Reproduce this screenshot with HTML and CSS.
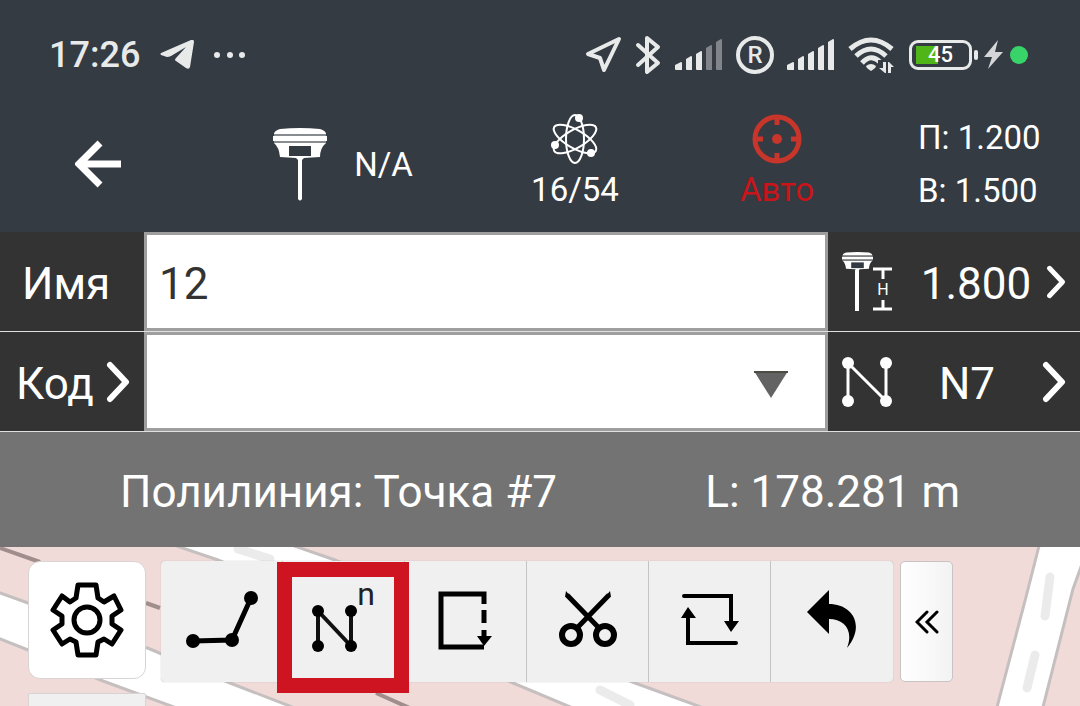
FILE: index.html
```html
<!doctype html>
<html lang="ru">
  <head>
    <meta charset="utf-8">
    <meta name="viewport" content="width=device-width">
    <title>Съёмка</title>
    <link rel="stylesheet" href="styles.css">
  </head>
  <body>
    <svg class="defs" aria-hidden="true">
      <symbol id="receiver" viewBox="0 0 54 73">
        <path fill="#fff" d="M7 1Q27-1 47 1Q53 3 53 6H1Q1 3 7 1ZM0 8H54V13H0ZM1 15H53Q47 20 47 29L31 30L29 32V71Q27 74 25 71V32L23 30L7 29Q6 19 1 15Z"/>
        <path fill="#888c90" d="M1 6H53V8H1ZM1 13H53V15H1Z"/>
        <path fill="#343a42" d="M16 18H38V28H16Z"/>
      </symbol>
      <symbol id="chevron" viewBox="0 0 24 42">
        <path d="M4 4L20 21L4 38" fill="none" stroke="#fff" stroke-width="6" stroke-linecap="round" stroke-linejoin="round"/>
      </symbol>
      <symbol id="bars" viewBox="0 0 48 31">
        <path d="M0 26L6 23Q7 23 7 24V31H1Q0 31 0 30ZM11 20L16 17Q17 17 17 18V31H12Q11 31 11 30ZM21 15L26 12Q27 12 27 13V31H22Q21 31 21 30Z"/>
      </symbol>
      <symbol id="bars-top" viewBox="0 0 48 31">
        <path d="M31 9L36 6Q37 6 37 7V31H32Q31 31 31 30ZM41 3L46 0Q47 0 47 1V31H42Q41 31 41 30Z"/>
      </symbol>
    </svg>

    <div class="status">
      <span class="time">17:26</span>
      <svg class="telegram" width="34" height="30" viewBox="0 0 34 30"><path d="M1 13L31 0Q34-1 34 2L30 27Q29 30 26 28L16 21Q14 20 16 18L26 7L11 16Q9 17 7 17L1 15Q0 14 1 13Z"/></svg>
      <svg width="32" height="8" viewBox="0 0 32 8"><circle cx="3" cy="4" r="3"/><circle cx="16" cy="4" r="3"/><circle cx="28" cy="4" r="3"/></svg>
      <div class="status-icons">
        <svg width="37" height="37" viewBox="0 0 37 37"><path d="M34 3L3 18L15 22L19 34Z" fill="none" stroke="#e8eaea" stroke-width="4" stroke-linejoin="round"/></svg>
        <svg width="27" height="40" viewBox="0 0 27 40"><path d="M3 10L23 28L12 37V3L23 12L3 30" fill="none" stroke="#e8eaea" stroke-width="4" stroke-linecap="round" stroke-linejoin="round"/></svg>
        <svg width="48" height="31"><use href="#bars"/><use class="dim" href="#bars-top"/></svg>
        <svg width="38" height="38" viewBox="0 0 38 38"><circle cx="19" cy="19" r="17" fill="none" stroke="#e8eaea" stroke-width="4"/><text class="roaming" x="19" y="27">R</text></svg>
        <svg width="48" height="31"><use href="#bars"/><use href="#bars-top"/></svg>
        <svg width="48" height="36" viewBox="0 0 48 36">
          <g fill="none" stroke="#e8eaea" stroke-width="5"><path d="M2 12Q23-6 44 12"/><path d="M8 19Q23 5 38 19"/><path d="M14 26Q23 16 32 25"/></g>
          <path d="M18 29Q23 25 28 29Q28 31 23 34Q18 31 18 29Z"/>
          <path d="M30 23H48V36H30Z" fill="#343b43"/>
          <path d="M35 25H38V36H37L31 31H35ZM40 36V25H41L46 30H43V36Z"/>
        </svg>
        <div class="power">
          <div class="battery"><span>45</span></div>
          <svg width="22" height="30" viewBox="0 0 22 30"><path d="M15 0L1 17H9L5 29L20 12H12Z" fill="#d5d6d7"/></svg>
          <span class="privacy"></span>
        </div>
      </div>
    </div>

    <div class="toolbar">
      <button class="back" aria-label="Назад">
        <svg width="46" height="48" viewBox="0 0 46 48"><path d="M25 3L4 24L25 45M4 24H46" fill="none" stroke="#fff" stroke-width="7"/></svg>
      </button>
      <button class="device"><svg width="54" height="73"><use href="#receiver"/></svg>N/A</button>
      <button class="stack">
        <svg width="50" height="52" viewBox="0 0 50 52">
          <g fill="none" stroke="#fff" stroke-width="2"><ellipse cx="25" cy="26" rx="9" ry="24"/><ellipse cx="25" cy="26" rx="9" ry="24" transform="rotate(60 25 26)"/><ellipse cx="25" cy="26" rx="9" ry="24" transform="rotate(120 25 26)"/></g>
          <g fill="#fff"><circle cx="29" cy="5" r="4"/><circle cx="5" cy="32" r="4"/><circle cx="41" cy="40" r="4"/></g>
        </svg>
        16/54
      </button>
      <button class="stack auto">
        <svg width="50" height="52" viewBox="0 0 50 52"><circle cx="25" cy="26" r="22" fill="none" stroke="#c8352b" stroke-width="5"/><circle cx="25" cy="26" r="5" fill="#c8352b"/><path d="M25 5V12M25 40V47M4 26H11M39 26H46" stroke="#c8352b" stroke-width="5"/></svg>
        Авто
      </button>
      <div class="accuracy"><span>П: 1.200</span><span>В: 1.500</span></div>
    </div>

    <div class="row">
      <label class="name" for="name">Имя</label>
      <input class="field" id="name" type="text" value="12">
      <button class="option antenna">
        <svg width="50" height="60" viewBox="0 0 50 60">
          <use href="#receiver" width="31" height="42"/>
          <path d="M15 18V59" stroke="#fff" stroke-width="4"/>
          <path d="M31 17H50M41 17V27M31 57H50M41 57V48" stroke="#fff" stroke-width="3"/>
          <text class="height-mark" x="41" y="43">H</text>
        </svg>
        <span>1.800</span>
        <svg width="20" height="34"><use href="#chevron"/></svg>
      </button>
    </div>
    <div class="row">
      <button class="code"><span id="code-label">Код</span><svg width="24" height="42"><use href="#chevron"/></svg></button>
      <div class="select">
        <select class="field" aria-labelledby="code-label"><option value=""></option></select>
        <svg class="caret" width="34" height="28" viewBox="0 0 34 28"><path d="M0 0H34L17 27Z" fill="#636363"/><path d="M0 1H34" stroke="#4c4c44" stroke-width="2"/></svg>
      </div>
      <button class="option">
        <svg width="50" height="50" viewBox="0 0 50 50"><path d="M6 44V6L44 44V6" fill="none" stroke="#fff" stroke-width="3"/><g fill="#fff"><circle cx="6" cy="6" r="6"/><circle cx="6" cy="44" r="6"/><circle cx="44" cy="6" r="6"/><circle cx="44" cy="44" r="6"/></g></svg>
        <span>N7</span>
        <svg width="24" height="42"><use href="#chevron"/></svg>
      </button>
    </div>

    <div class="info"><span>Полилиния: Точка #7</span><span>L: 178.281 m</span></div>

    <div class="map">
      <svg class="roads" viewBox="0 0 1080 159" preserveAspectRatio="xMinYMin slice">
        <g fill="#fff" stroke="#c5c0bf" stroke-width="3">
          <path d="M165-5L218 13L513 136L580 164H712L635 136L335 13L283-5Z"/>
          <path d="M-5 44L28 56L150 102L230 136L300 163H182L103 134L28 103L-5 90Z"/>
          <path d="M1040-5L1026 50L996 164H1042L1073 42L1090-5Z"/>
        </g>
        <g fill="none" stroke="#ebebeb" stroke-width="9" stroke-linecap="round"><path d="M238 2L270 12M600 143L630 158M1050 30L1045 69M1035 108L1027 141"/></g>
        <path d="M0 1L40 15M146 56L160 61M376 146L412 162" fill="none" stroke="#a08e8d" stroke-width="4"/>
      </svg>
      <div class="side">
        <button class="card" aria-label="Настройки">
          <svg width="74" height="76" viewBox="0 0 74 76" fill="none" stroke="#000" stroke-width="5" stroke-linejoin="round">
            <path d="M28 3H46L48 16L54 20L64 14L71 28L62 34V42L71 48L62 62L54 57L48 60L46 73H28L26 60L20 57L12 62L3 48L12 42V34L3 28L12 14L20 20L26 16Z"/>
            <circle cx="37" cy="38" r="13"/>
          </svg>
        </button>
        <div class="card lower"></div>
      </div>
      <div class="tools">
        <button aria-label="Линия"><svg width="74" height="60" viewBox="0 0 74 60"><path d="M8 52L47 51L66 9" fill="none" stroke="#000" stroke-width="5"/><circle cx="8" cy="52" r="7"/><circle cx="47" cy="51" r="7"/><circle cx="66" cy="9" r="7"/></svg></button>
        <button class="active" aria-label="Точка n">
          <svg width="68" height="99" viewBox="0 -15 68 99"><path d="M8 61V26L41 61V26" fill="none" stroke="#111" stroke-width="4"/><circle cx="8" cy="26" r="6"/><circle cx="8" cy="61" r="6"/><circle cx="41" cy="26" r="6"/><circle cx="41" cy="61" r="6"/><text class="power-mark" x="56" y="20">n</text></svg>
        </button>
        <button aria-label="Замкнуть"><svg width="56" height="65" viewBox="0 -4 56 65"><path d="M46 56H3V3H46V13M46 19V32M46 39V46" fill="none" stroke="#000" stroke-width="5"/><path d="M39 45H54L46 55Z"/></svg></button>
        <button aria-label="Вырезать"><svg width="58" height="56" viewBox="0 0 58 56" fill="none" stroke="#000" stroke-width="6"><path d="M8 4L40 37M50 4L18 37" stroke-width="5"/><path d="M7 0L11 5L6 6ZM51 0L47 5L52 6Z" fill="#000" stroke="none"/><circle cx="12" cy="44" r="9"/><circle cx="46" cy="44" r="9"/></svg></button>
        <button aria-label="Обратить"><svg width="58" height="52" viewBox="0 0 58 52"><path d="M3 3H50V30M55 50H7V22" fill="none" stroke="#000" stroke-width="4" stroke-linecap="round"/><path d="M43 28H58L50 39ZM0 25L7 14L15 25Z"/></svg></button>
        <button aria-label="Отменить"><svg width="50" height="58" viewBox="0 0 50 58"><path d="M22 0V14C45 14 59 35 40 58C47 40 37 29 22 29V44L0 22Z"/></svg></button>
      </div>
      <button class="collapse" aria-label="Свернуть"><svg width="24" height="24" viewBox="0 0 24 24"><path d="M12 2L2 12L12 22M22 2L12 12L22 22" fill="none" stroke="#000" stroke-width="3" stroke-linecap="round"/></svg></button>
    </div>
  </body>
</html>
```
FILE: styles.css
```css
*, *::before, *::after {
  box-sizing: border-box;
}
html, body {
  height: 100%;
  margin: 0;
}
body {
  display: flex;
  flex-direction: column;
  overflow: hidden;
  font-family: Roboto, sans-serif;
  color: #fff;
  background: #343b43;
}
button, input, select {
  margin: 0;
  padding: 0;
  border: 0;
  border-radius: 0;
  font: inherit;
  color: inherit;
  background: none;
}
svg {
  display: block;
  flex: none;
}
.defs {
  position: absolute;
  width: 0;
  height: 0;
}

/* phone status bar */
.status {
  display: flex;
  align-items: center;
  height: 108px;
  padding: 1px 52px 0 49px;
  gap: 20px;
  fill: #e8eaea;
}
.time {
  font-size: 36px;
  font-weight: 500;
  color: #e8eaea;
}
.status-icons {
  display: flex;
  align-items: center;
  gap: 13px;
  margin-left: auto;
}
.dim {
  fill: #818589;
}
.roaming {
  font-size: 24px;
  font-weight: 500;
  text-anchor: middle;
}
.power {
  display: flex;
  align-items: center;
  gap: 5px;
}
.battery {
  position: relative;
  width: 63px;
  height: 30px;
  margin-right: 6px;
  border: 3px solid #e8eaea;
  border-radius: 9px;
  font-size: 22px;
  font-weight: 500;
  line-height: 24px;
  text-align: center;
  background: linear-gradient(to right, #50b517 22px, transparent 22px) 4px 3px / 50px 18px no-repeat;
}
.battery::after {
  content: "";
  position: absolute;
  top: 7px;
  right: -9px;
  width: 4px;
  height: 10px;
  border-radius: 2px;
  background: #e8eaea;
}
.privacy {
  width: 18px;
  height: 18px;
  border-radius: 50%;
  background: #38d46a;
}

.toolbar {
  display: grid;
  grid-template-columns: 196fr 294fr 170fr 234fr 186fr;
  height: 124px;
  padding-bottom: 12px;
  font-size: 33px;
}
.toolbar button {
  display: flex;
  align-items: center;
  justify-content: center;
}
.toolbar .device {
  gap: 27px;
}
.toolbar .stack {
  flex-direction: column;
  line-height: 50px;
}
.toolbar .auto {
  color: #c9141a;
}
.accuracy {
  display: flex;
  flex-direction: column;
  justify-content: center;
  padding-left: 24px;
  line-height: 53px;
}

/* point name and code */
.row {
  display: grid;
  grid-template-columns: 144px 1fr 252px;
  height: 100px;
  border-bottom: 1px solid #e0e0e0;
  font-size: 44px;
  background: #333;
}
.row button span {
  padding-top: 4px;
}
.name {
  display: flex;
  align-items: center;
  padding: 4px 0 0 22px;
}
.code {
  display: flex;
  align-items: center;
  justify-content: space-between;
  padding: 0 14px 0 16px;
}
.field {
  width: 100%;
  height: 99px;
  padding: 4px 12px 0;
  border: 3px solid #9e9e9e;
  color: #333;
  background: #fff;
  appearance: none;
}
.select {
  position: relative;
}
.caret {
  position: absolute;
  top: 39px;
  right: 40px;
  pointer-events: none;
}
.option {
  display: flex;
  align-items: center;
  justify-content: space-between;
  padding: 0 14px;
}
.antenna span {
  margin-left: 14px;
}

.info {
  display: flex;
  align-items: center;
  justify-content: space-between;
  height: 115px;
  padding: 4px 120px 0;
  font-size: 44px;
  background: #737373;
}

.map {
  position: relative;
  display: flex;
  flex: 1;
  align-items: flex-start;
  min-height: 0;
  padding: 14px 28px;
  overflow: hidden;
  background: #f1dbd9;
}
.roads {
  position: absolute;
  top: 0;
  left: 0;
  width: 100%;
}
.side {
  position: relative;
  margin-right: 15px;
}
.card {
  display: flex;
  align-items: center;
  justify-content: center;
  width: 118px;
  height: 118px;
  border: 1px solid #d8d4d4;
  border-radius: 12px;
  background: #fff;
}
.lower {
  margin-top: 14px;
  border-radius: 2px;
  background: #f0f0f0;
}
.tools {
  position: relative;
  display: flex;
  margin-right: 7px;
  border-radius: 4px;
  background: #f0f0f0;
  box-shadow: 0 0 1px #999;
}
.tools button {
  position: relative;
  display: flex;
  align-items: center;
  justify-content: center;
  width: 122px;
  height: 121px;
  padding-bottom: 5px;
  border-right: 1px solid #c4c4c4;
}
.tools button:last-child {
  border-right: 0;
}
.active::after {
  content: "";
  position: absolute;
  top: 1px;
  left: -6px;
  width: 132px;
  height: 131px;
  border: 15px solid #ce1420;
  z-index: 1;
}
.power-mark {
  font-size: 32px;
  text-anchor: middle;
  fill: #222;
}
.height-mark {
  font-size: 16px;
  text-anchor: middle;
  fill: #fff;
}
.collapse {
  position: relative;
  display: flex;
  align-items: center;
  justify-content: center;
  width: 53px;
  height: 121px;
  border: 1px solid #c8c4c4;
  border-radius: 5px;
  background: linear-gradient(to right, #fff, #f3f3f3);
}
```
